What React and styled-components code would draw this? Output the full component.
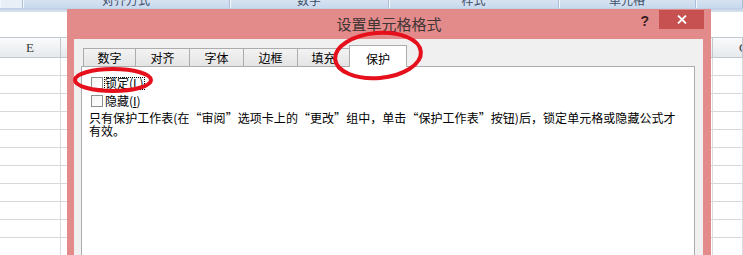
import React from 'react';
import styled, { createGlobalStyle } from 'styled-components';

const CJK = `"Noto Sans CJK SC", "Noto Sans", sans-serif`;

const GlobalStyle = createGlobalStyle`
  html, body { margin: 0; padding: 0; background: #fff; }
  body { font-family: ${CJK}; }
  * { box-sizing: border-box; }
`;

const Page = styled.div`
  position: relative;
  width: 743px;
  height: 255px;
  overflow: hidden;
  background: #fff;
`;

const Sheet = styled.div`
  display: flex;
  flex-direction: column;
`;

const RibbonStrip = styled.div`
  display: flex;
  height: 8px;
  background: #dfe7f2;
`;

const RibbonGroup = styled.div`
  flex: ${p => (p.$w ? 'none' : '1')};
  width: ${p => (p.$w ? `${p.$w}px` : 'auto')};
  height: 8px;
  overflow: hidden;
  text-align: center;
  background: ${p => (p.$light ? '#e9eff7' : 'linear-gradient(#d6e2f1, #c8d9ee)')};
  border-right: 1px solid #a9bed8;
  box-shadow: inset 1px 0 0 #f4f8fc;
  color: #3d4f69;
  font-size: 12px;
`;

const RibbonLabel = styled.span`
  display: block;
  margin-top: -6px;
  line-height: 12px;
`;

const RibbonBase = styled.div`
  height: 4px;
  background: linear-gradient(#bccde3, #dbe5f1);
`;

const FormulaArea = styled.div`
  height: 26px;
  background: #fff;
  border-bottom: 1px solid #c3c7cc;
`;

const HeaderRow = styled.div`
  display: flex;
  height: 20px;
  background: linear-gradient(#fafbfc, #e6e9ed);
  border-bottom: 1px solid #c3c7cc;
`;

const HeaderCell = styled.div`
  flex: ${p => (p.$w ? 'none' : '1')};
  width: ${p => (p.$w ? `${p.$w}px` : 'auto')};
  border-right: 1px solid #c3c7cc;
  font-family: "Liberation Serif", serif;
  font-size: 13px;
  line-height: 19px;
  color: #3a3a3a;
  text-align: ${p => p.$align || 'center'};
  padding-left: ${p => p.$pl || 0}px;
  white-space: nowrap;
  overflow: hidden;
`;

const GridRow = styled.div`
  display: flex;
  height: 18px;
`;

const GridCell = styled.div`
  flex: ${p => (p.$w ? 'none' : '1')};
  width: ${p => (p.$w ? `${p.$w}px` : 'auto')};
  border-right: 1px solid #dadcdf;
  border-bottom: 1px solid #d6d8db;
`;

const Dialog = styled.div`
  position: absolute;
  left: 67px;
  top: 9px;
  width: 644px;
  height: 250px;
  background: #e38a8a;
  display: flex;
  flex-direction: column;
  z-index: 5;
`;

const TitleBar = styled.div`
  display: grid;
  grid-template-columns: 1fr auto 1fr;
  height: 30px;
  flex: none;
`;

const Title = styled.div`
  grid-column: 2;
  font-size: 15px;
  line-height: 30px;
  color: #3f3535;
`;

const TitleControls = styled.div`
  grid-column: 3;
  display: flex;
  justify-content: flex-end;
  align-items: flex-start;
`;

const HelpMark = styled.div`
  font-family: "Liberation Sans", Arial, sans-serif;
  font-weight: bold;
  font-size: 14px;
  line-height: 16px;
  margin-top: 4px;
  margin-right: 10px;
  color: #3a2020;
`;

const CloseButton = styled.div`
  width: 45px;
  height: 19px;
  margin-top: 1px;
  margin-right: 7px;
  background: #c75050;
  display: flex;
  align-items: center;
  justify-content: center;
`;

const Body = styled.div`
  flex: 1;
  margin: 0 8px 0 7px;
  background: #f0f0f0;
  padding: 6px 8px 0 7px;
  display: flex;
  flex-direction: column;
`;

const TabRow = styled.div`
  display: flex;
  align-items: flex-end;
  height: 21px;
  margin-left: 2px;
  position: relative;
  z-index: 2;
  flex: none;
`;

const Tab = styled.div`
  width: ${p => p.$w}px;
  height: ${p => (p.$active ? 22 : 18)}px;
  margin-bottom: ${p => (p.$active ? -1 : 0)}px;
  margin-left: -1px;
  &:first-child { margin-left: 0; }
  border: 1px solid #acacac;
  border-bottom: none;
  background: ${p => (p.$active ? '#fff' : 'linear-gradient(#f3f3f3, #e4e4e4)')};
  font-size: 12px;
  color: #000;
  display: flex;
  justify-content: center;
  align-items: center;
  padding-top: ${p => (p.$active ? 3 : 0)}px;
  position: relative;
  z-index: ${p => (p.$active ? 2 : 1)};
`;

const Panel = styled.div`
  flex: 1;
  background: #fff;
  border: 1px solid #acacac;
  border-bottom: none;
  padding: 7px 0 0 9px;
  position: relative;
  z-index: 1;
`;

const CheckRow = styled.div`
  display: flex;
  align-items: center;
  height: 18px;
`;

const CheckBox = styled.span`
  width: 12px;
  height: 12px;
  border: 1px solid #8e8f8f;
  background: linear-gradient(135deg, #f4f4f4, #fff);
  flex: none;
`;

const CheckLabel = styled.span`
  margin-left: 1px;
  padding: 0 1px;
  height: 13px;
  display: flex;
  align-items: center;
  font-size: 12px;
  color: #000;
  outline: ${p => (p.$focused ? '1px dotted #000' : 'none')};
  outline-offset: -1px;
  line-height: 12px;
`;

const Note = styled.p`
  margin: 1px 0 0 -2px;
  width: 592px;
  font-size: 12px;
  line-height: 13px;
  letter-spacing: 0.05px;
  color: #000;
`;

const Annotations = styled.svg`
  position: absolute;
  left: 0;
  top: 0;
  pointer-events: none;
  z-index: 10;
`;

const ribbonGroups = [
  { w: 23, light: true, label: '' },
  { w: 207, label: '对齐方式' },
  { w: 159, label: '数字' },
  { w: 170, label: '样式' },
  { w: 137, label: '单元格' },
  { w: 0, label: '' },
];

const tabs = [
  { label: '数字', w: 53 },
  { label: '对齐', w: 55 },
  { label: '字体', w: 55 },
  { label: '边框', w: 55 },
  { label: '填充', w: 53 },
  { label: '保护', w: 58, active: true },
];

export default function App() {
  const rows = Array.from({ length: 11 });
  return (
    <Page>
      <GlobalStyle />
      <Sheet>
        <RibbonStrip>
          {ribbonGroups.map((g, i) => (
            <RibbonGroup key={i} $w={g.w} $light={g.light}>
              <RibbonLabel>{g.label}</RibbonLabel>
            </RibbonGroup>
          ))}
        </RibbonStrip>
        <RibbonBase />
        <FormulaArea />
        <HeaderRow>
          <HeaderCell $w={61}>E</HeaderCell>
          <HeaderCell $w={652}>F</HeaderCell>
          <HeaderCell $align="left" $pl={26}>G</HeaderCell>
        </HeaderRow>
        {rows.map((_, i) => (
          <GridRow key={i}>
            <GridCell $w={61} />
            <GridCell $w={652} />
            <GridCell />
          </GridRow>
        ))}
      </Sheet>

      <Dialog>
        <TitleBar>
          <Title>设置单元格格式</Title>
          <TitleControls>
            <HelpMark>?</HelpMark>
            <CloseButton>
              <svg width="10" height="9" viewBox="0 0 10 9">
                <path d="M1 0.5 L9 8.5 M9 0.5 L1 8.5" stroke="#fff" strokeWidth="1.8" fill="none" />
              </svg>
            </CloseButton>
          </TitleControls>
        </TitleBar>
        <Body>
          <TabRow>
            {tabs.map(t => (
              <Tab key={t.label} $w={t.w} $active={t.active}>{t.label}</Tab>
            ))}
          </TabRow>
          <Panel>
            <CheckRow>
              <CheckBox />
              <CheckLabel $focused>锁定(<u>L</u>)</CheckLabel>
            </CheckRow>
            <CheckRow>
              <CheckBox />
              <CheckLabel>隐藏(<u>I</u>)</CheckLabel>
            </CheckRow>
            <Note>
              只有保护工作表(在“审阅”选项卡上的“更改”组中，单击“保护工作表”按钮)后，锁定单元格或隐藏公式才有效。
            </Note>
          </Panel>
        </Body>
      </Dialog>

      <Annotations width="743" height="255" viewBox="0 0 743 255">
        <ellipse cx="113" cy="80" rx="38" ry="11" fill="none" stroke="#e5101c" strokeWidth="4" />
        <ellipse cx="378" cy="55.5" rx="43" ry="22.5" fill="none" stroke="#e5101c" strokeWidth="4" transform="rotate(-5 378 55.5)" />
      </Annotations>
    </Page>
  );
}
